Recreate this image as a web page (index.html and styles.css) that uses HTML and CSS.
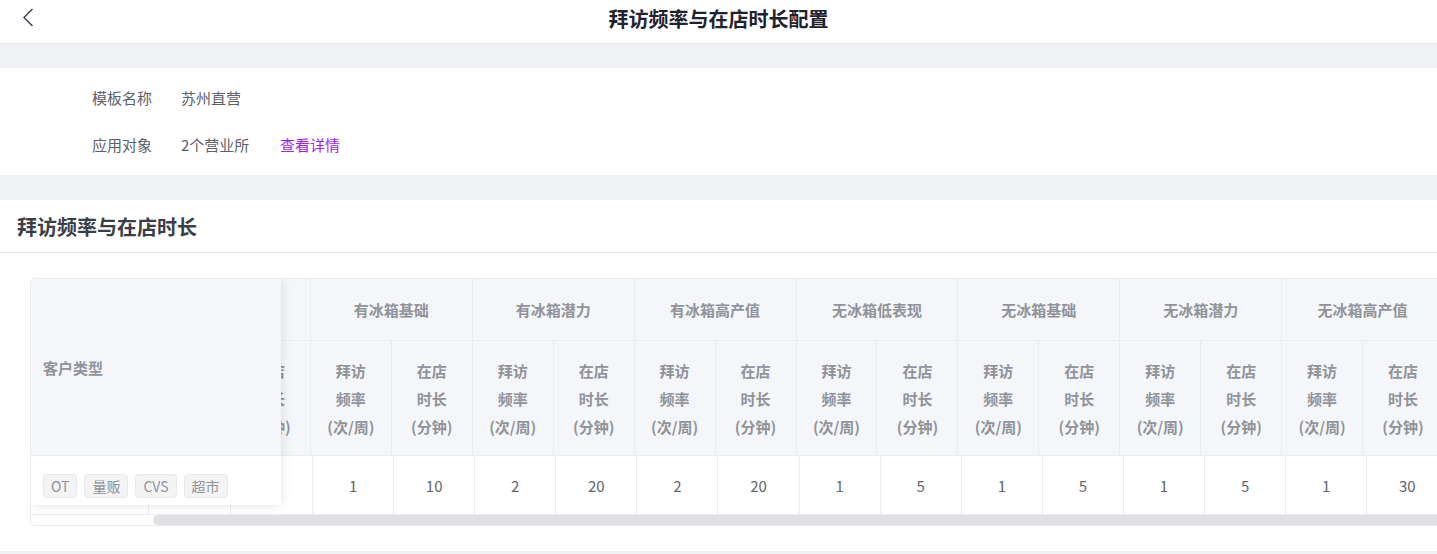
FILE: index.html
```html
<!DOCTYPE html>
<html lang="zh-CN">
<head>
<meta charset="utf-8">
<title>拜访频率与在店时长配置</title>
<link rel="stylesheet" href="styles.css">
</head>
<body>
<header class="navbar">
  <div class="nav-left">
    <svg class="back" width="12" height="19" viewBox="0 0 12 19"><polyline points="10.5,1 2,9.5 10.5,18" fill="none" stroke="#3c4150" stroke-width="1.5" stroke-linejoin="miter"/></svg>
  </div>
  <h1 class="nav-title">拜访频率与在店时长配置</h1>
  <div class="nav-right"></div>
</header>
<div class="gap gap-top"></div>
<section class="info">
  <div class="info-row"><span class="label">模板名称</span><span class="value">苏州直营</span></div>
  <div class="info-row"><span class="label">应用对象</span><span class="value">2个营业所</span><a class="link">查看详情</a></div>
</section>
<div class="gap gap-mid"></div>
<section class="panel">
  <h2 class="panel-title">拜访频率与在店时长</h2>
  <div class="panel-body">
    <div class="table">
      <div class="thead">
        <div class="th th-first"></div>
        <div class="th th-group">有冰箱低表现</div>
        <div class="th th-group">有冰箱基础</div>
        <div class="th th-group">有冰箱潜力</div>
        <div class="th th-group">有冰箱高产值</div>
        <div class="th th-group">无冰箱低表现</div>
        <div class="th th-group">无冰箱基础</div>
        <div class="th th-group">无冰箱潜力</div>
        <div class="th th-group">无冰箱高产值</div>
        <div class="th th-sub">拜访<br>频率<br>(次/周)</div>
        <div class="th th-sub">在店<br>时长<br>(分钟)</div>
        <div class="th th-sub">拜访<br>频率<br>(次/周)</div>
        <div class="th th-sub">在店<br>时长<br>(分钟)</div>
        <div class="th th-sub">拜访<br>频率<br>(次/周)</div>
        <div class="th th-sub">在店<br>时长<br>(分钟)</div>
        <div class="th th-sub">拜访<br>频率<br>(次/周)</div>
        <div class="th th-sub">在店<br>时长<br>(分钟)</div>
        <div class="th th-sub">拜访<br>频率<br>(次/周)</div>
        <div class="th th-sub">在店<br>时长<br>(分钟)</div>
        <div class="th th-sub">拜访<br>频率<br>(次/周)</div>
        <div class="th th-sub">在店<br>时长<br>(分钟)</div>
        <div class="th th-sub">拜访<br>频率<br>(次/周)</div>
        <div class="th th-sub">在店<br>时长<br>(分钟)</div>
        <div class="th th-sub">拜访<br>频率<br>(次/周)</div>
        <div class="th th-sub">在店<br>时长<br>(分钟)</div>
      </div>
      <div class="tbody">
        <div class="td td-first"></div>
        <div class="td td-wide">1</div>
        <div class="td td-wide">5</div>
        <div class="td">1</div>
        <div class="td">10</div>
        <div class="td">2</div>
        <div class="td">20</div>
        <div class="td">2</div>
        <div class="td">20</div>
        <div class="td">1</div>
        <div class="td">5</div>
        <div class="td">1</div>
        <div class="td">5</div>
        <div class="td">1</div>
        <div class="td">5</div>
        <div class="td">1</div>
        <div class="td">30</div>
      </div>
      <div class="scrollbar"><div class="thumb"></div></div>
      <div class="fixed">
        <div class="fixed-head">客户类型</div>
        <div class="fixed-row">
          <span class="tag">OT</span>
          <span class="tag">量贩</span>
          <span class="tag">CVS</span>
          <span class="tag">超市</span>
        </div>
      </div>
    </div>
  </div>
</section>
<div class="gap gap-bottom"></div>
</body>
</html>
```

FILE: styles.css
```css
* { box-sizing: border-box; }
html, body {
  margin: 0;
  padding: 0;
  overflow: hidden;
  background: #ffffff;
  font-family: "Noto Sans CJK SC", "Noto Sans", sans-serif;
}

/* nav */
.navbar {
  height: 44px;
  border-bottom: 1px solid #e4e5e8;
  display: grid;
  grid-template-columns: 1fr auto 1fr;
  background: #fff;
}
.nav-left {
  padding: 8px 0 0 22px;
}
.back { display: block; }
.nav-title {
  margin: 0;
  font-size: 20px;
  line-height: 38px;
  font-weight: 700;
  color: #1f2330;
}

.gap { background: #f0f1f5; }
.gap-top { height: 24px; }
.gap-mid { height: 25px; }
.gap-bottom { height: 10px; }

/* info */
.info {
  background: #fff;
  padding: 20px 0 20px 92px;
  display: flex;
  flex-direction: column;
  gap: 27px;
}
.info-row {
  display: flex;
  height: 20px;
  line-height: 20px;
  font-size: 15px;
  color: #5d6068;
}
.label { width: 89px; }
.value { width: 99px; }
.link { color: #a01ef0; cursor: pointer; }

/* panel */
.panel { background: #fff; }
.panel-title {
  margin: 0;
  height: 53px;
  padding: 2px 0 0 17px;
  line-height: 50px;
  font-size: 20px;
  font-weight: 700;
  color: #3a3e48;
  border-bottom: 1px solid #e4e5e8;
}
.panel-body {
  padding: 25px 0 25px 30px;
}

/* table */
.table {
  position: relative;
  width: 1416px;
  border: 1px solid #e9ebf0;
  border-radius: 4px;
  overflow: hidden;
}
.thead {
  display: grid;
  grid-template-columns: 118px repeat(16, 80.95px);
  grid-template-rows: 62px 115px;
  background: #f5f6fa;
}
.th {
  border-right: 1px solid #e9ebf0;
  border-bottom: 1px solid #e9ebf0;
  color: #909399;
  font-weight: 700;
  font-size: 15px;
  display: flex;
  align-items: center;
  justify-content: center;
  text-align: center;
}
.th-first {
  grid-row: span 2;
}
.th-group {
  grid-column: span 2;
  line-height: 20px;
}
.th-sub {
  line-height: 28px;
  padding-top: 1px;
}
.tbody {
  display: grid;
  grid-template-columns: 118px 82px 82px repeat(14, 81.1px);
  height: 59px;
}
.td {
  border-right: 1px solid #e9ebf0;
  border-bottom: 1px solid #e9ebf0;
  display: flex;
  align-items: center;
  justify-content: center;
  font-size: 15px;
  color: #62656b;
}
.scrollbar {
  height: 10px;
  padding-left: 122px;
}
.thumb {
  height: 10px;
  border-radius: 5px;
  background: #dfe0e3;
}

/* fixed left column */
.fixed {
  position: absolute;
  left: 0;
  top: 0;
  width: 250px;
  height: 226px;
  overflow: hidden;
  background: #fff;
  box-shadow: 0 0 10px rgba(0, 0, 0, 0.12);
}
.fixed-head {
  height: 177px;
  background: #f5f6fa;
  border-bottom: 1px solid #e9ebf0;
  display: flex;
  align-items: center;
  padding: 0 12px;
  color: #909399;
  font-weight: 700;
  font-size: 15px;
}
.fixed-row {
  height: 59px;
  display: flex;
  align-items: center;
  gap: 7px;
  padding: 0 12px;
}
.tag {
  height: 24px;
  line-height: 22px;
  padding: 0 7px;
  font-size: 14px;
  color: #909399;
  background: #f4f4f5;
  border: 1px solid #e9e9eb;
  border-radius: 4px;
}
```
